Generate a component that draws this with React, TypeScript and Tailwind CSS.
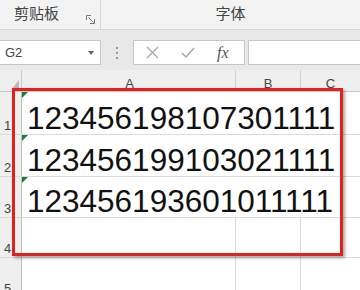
import React from "react";

const rows = [
  { n: "1", h: "h-[43px]", value: "123456198107301111" },
  { n: "2", h: "h-[42px]", value: "123456199103021111" },
  { n: "3", h: "h-[41px]", value: "123456193601011111" },
];

const font = "font-['Liberation_Sans','Noto_Sans_CJK_SC',sans-serif]";

function Corner() {
  return (
    <svg className="absolute left-0 top-0" width="6" height="6" viewBox="0 0 6 6">
      <polygon points="0,0 6,0 0,6" fill="#1f7a3d" />
    </svg>
  );
}

function RowHead({ n }: { n: string }) {
  return (
    <div className="flex w-[22px] shrink-0 items-end border-r border-[#bfbfbf] bg-[#efefef] pb-[2px] pl-[4px] text-[13px] leading-none text-[#444]">
      {n}
    </div>
  );
}

export default function App(): JSX.Element {
  return (
    <div className={`relative h-[290px] w-[360px] overflow-hidden bg-white ${font}`}>
      {/* ribbon group labels */}
      <div className="flex h-[30px] border-b border-[#d6d6d6] bg-[#f3f3f3]">
        <div className="relative flex w-[101px] items-center border-r border-[#d6d6d6] pl-[14px] text-[15px] text-[#444]">
          剪贴板
          <svg className="absolute left-[86px] top-[15px]" width="9" height="9" viewBox="0 0 9 9" fill="none" stroke="#777" strokeWidth="1">
            <path d="M0.5 5V0.5H5" />
            <path d="M2.5 2.5L7.5 7.5M8.5 4V8.5H4" />
          </svg>
        </div>
        <div className="flex flex-1 items-center justify-center text-[15px] text-[#444]">字体</div>
      </div>

      {/* formula bar */}
      <div className="flex h-[40px] bg-[#e8e8e8] pb-[5px] pt-[10px]">
        <div className="relative flex w-[101px] items-center border border-l-0 border-[#c6c6c6] bg-white pl-[5px] text-[13px] text-[#444]">
          G2
          <span className="absolute right-[6px] top-[10px] h-0 w-0 border-x-[3px] border-t-[4px] border-x-transparent border-t-[#666]" />
        </div>
        <div className="flex w-[32px] flex-col items-center justify-center gap-[3px]">
          <span className="h-[2px] w-[2px] bg-[#9a9a9a]" />
          <span className="h-[2px] w-[2px] bg-[#9a9a9a]" />
          <span className="h-[2px] w-[2px] bg-[#9a9a9a]" />
        </div>
        <div className="flex w-[112px] items-center border border-[#c6c6c6] bg-white">
          <svg className="ml-[12px]" width="13" height="13" viewBox="0 0 13 13" stroke="#a8a8a8" strokeWidth="1.3">
            <path d="M1 1L12 12M12 1L1 12" />
          </svg>
          <svg className="ml-[22px]" width="14" height="11" viewBox="0 0 14 11" fill="none" stroke="#a8a8a8" strokeWidth="1.5">
            <path d="M1 6L5 10L13 1" />
          </svg>
          <span className="ml-[22px] font-['Liberation_Serif',serif] text-[16px] italic text-[#555]">fx</span>
        </div>
        <div className="ml-[3px] flex-1 border border-r-0 border-[#c6c6c6] bg-white" />
      </div>

      {/* sheet */}
      <div className="relative">
        {/* column headers */}
        <div className="flex h-[22px] border-b border-[#c8c8c8] bg-[#efefef] text-[13px] leading-none text-[#444]">
          <div className="relative w-[22px] shrink-0 border-r border-[#c8c8c8]">
            <span className="absolute bottom-[1px] right-[2px] h-0 w-0 border-b-[10px] border-l-[8px] border-b-[#b8b8b8] border-l-transparent" />
          </div>
          <div className="flex w-[214px] items-end justify-center border-r border-[#d0d0d0] pb-[1px] pl-[2px]">A</div>
          <div className="flex w-[65px] items-end justify-center border-r border-[#d0d0d0] pb-[1px]">B</div>
          <div className="flex flex-1 items-end justify-center pb-[1px]">C</div>
        </div>

        {rows.map((r) => (
          <div key={r.n} className={`flex ${r.h} border-b border-[#dadada]`}>
            <RowHead n={r.n} />
            <div className="relative flex flex-1 items-end whitespace-nowrap pl-[5px] text-[31.5px] leading-none text-[#111]">
              <Corner />
              {r.value}
            </div>
          </div>
        ))}

        {["4", "5"].map((n) => (
          <div key={n} className="flex h-[40px] border-b border-[#dadada]">
            <RowHead n={n} />
            <div className="w-[214px] border-r border-[#dadada]" />
            <div className="w-[65px] border-r border-[#dadada]" />
            <div className="flex-1" />
          </div>
        ))}

        {/* highlight frame */}
        <div className="absolute left-[12px] top-[18px] h-[168px] w-[331px] border-[3px] border-[#e2211f] shadow-[2px_2px_3px_rgba(0,0,0,0.35)]" />
      </div>
    </div>
  );
}
